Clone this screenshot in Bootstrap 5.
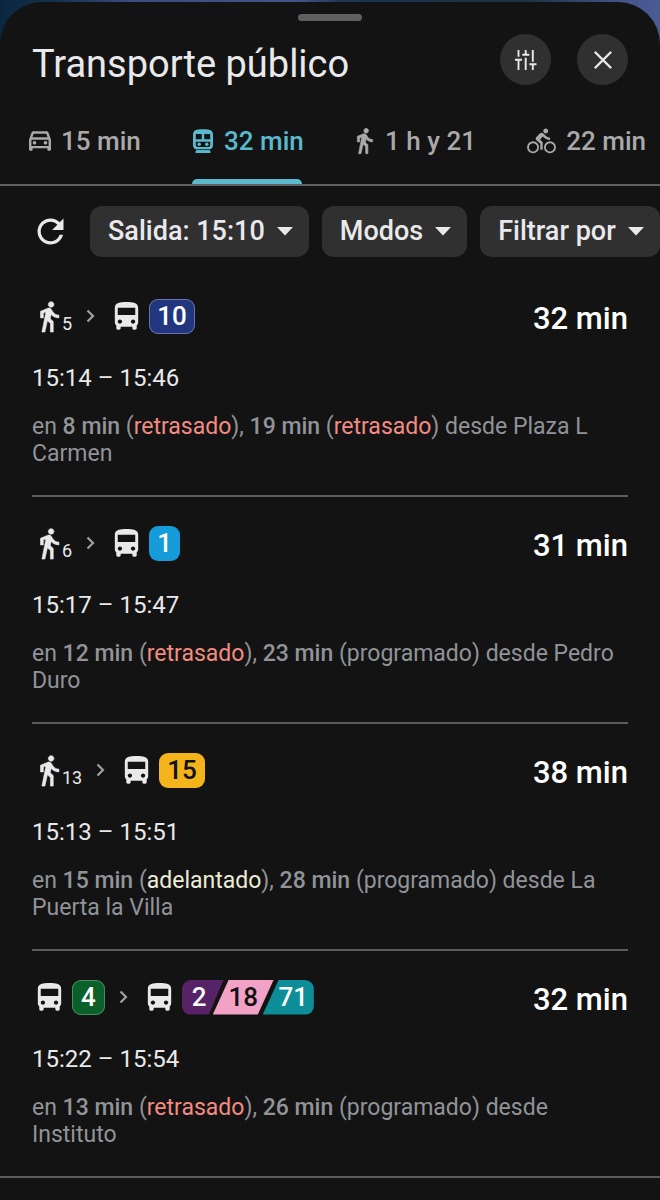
<!DOCTYPE html>
<html lang="es">
<head>
<meta charset="utf-8">
<meta name="viewport" content="width=device-width, initial-scale=1">
<title>Transporte público</title>
<link href="https://cdn.jsdelivr.net/npm/bootstrap@5.3.0/dist/css/bootstrap.min.css" rel="stylesheet">
<style>
  body { font-family: Roboto, "Liberation Sans", sans-serif; color: #e9e9eb; min-height: 100vh;
    background: linear-gradient(90deg, #0b2740 0, #12304c 8%, #3c4c80 20%, #44548a 45%, #1c3550 52%, #1c3348 80%, #46568c 95%, #4a5b94 100%); }
  .sheet { background: #131313; border-radius: 42px 42px 0 0; margin-top: 2px; min-height: calc(100vh - 2px); overflow: hidden; }
  .grabber { width: 64px; height: 7px; border-radius: 4px; background: #606060; margin-top: 12px; }
  .head-row { padding: 13px 32px 0; gap: 26px; }
  .sheet-title { font-size: 38px; line-height: 49px; font-weight: 400; padding-top: 6px; }
  .round-btn { width: 51px; height: 51px; background: #303030; color: #e9e9eb; border: 0; border-radius: 50%; }
  svg { fill: currentColor; flex: none; display: block; }
  .modes { padding: 27px 14px 0 29px; border-bottom: 2px solid #616161; }
  .mode-tab { background: none; border: 0; padding: 0; gap: 10px; height: 68px; align-items: flex-start; font-size: 26px; line-height: 50px; font-weight: 500; color: #a9a9a9; white-space: nowrap; position: relative; }
  .mode-tab svg { height: 50px; }
  .mode-tab.active { color: #5ab9cc; }
  .mode-tab.active::after { content: ""; position: absolute; left: 0; right: 2px; bottom: 0; height: 5px; border-radius: 5px 5px 0 0; background: #5ab9cc; }
  .filters { padding: 20px 0 0 31px; gap: 13px; overflow: hidden; }
  .filters .reload { background: none; border: 0; padding: 0; color: #e9e9eb; margin-right: 7px; }
  .chip { height: 51px; border: 0; border-radius: 12px; background: #303030; color: #e9e9eb; font-size: 27px; font-weight: 500; padding: 0 16px 0 18px; gap: 12px; flex: none; }
  .routes { padding-top: 13px; }
  .route { padding: 28px 0; margin: 0 32px; border-bottom: 2px solid #5c5c5e; }
  .route:last-child { margin: 0; padding-left: 32px; padding-right: 32px; }
  .legs { height: 36px; }
  .walk-min { font-size: 18px; line-height: 20px; align-self: flex-end; margin-left: -4px; }
  .sep { margin: 0 14px; color: #a0a0a0; }
  .line-no { height: 35px; padding: 0 8px; border-radius: 9px; font-size: 26px; line-height: 35px; font-weight: 500; color: #fff; text-align: center; margin-left: 5px; }
  .navy { background: #22367f; box-shadow: inset 0 0 0 1px #6472a6; }
  .sky { background: #159bd8; }
  .amber { background: #f3b31b; color: #111; }
  .green { background: #0b6029; box-shadow: inset 0 0 0 1px #4d8a60; padding: 0 9px; }
  .purple { background: #572367; }
  .pink { background: #f3a2c7; color: #111; }
  .teal { background: #0c8d97; }
  .cut-a { width: 42px; text-align: left; padding-left: 10px; border-radius: 9px 0 0 9px; clip-path: polygon(0 0, 100% 0, calc(100% - 15px) 100%, 0 100%); }
  .cut-b { width: 61px; margin-left: -11px; border-radius: 0; clip-path: polygon(16px 0, 100% 0, calc(100% - 16px) 100%, 0 100%); }
  .cut-c { width: 51px; margin-left: -11px; padding: 0 0 0 10px; border-radius: 0 9px 9px 0; clip-path: polygon(16px 0, 100% 0, 100% 100%, 0 100%); }
  .total { font-size: 31px; line-height: 36px; font-weight: 500; color: #fff; white-space: nowrap; padding-top: 3px; }
  .span-time { font-size: 24px; line-height: 36px; margin-top: 23px; }
  .detail { font-size: 23px; line-height: 27px; color: #919398; margin: 17px 0 0; }
  .detail b { font-weight: 500; }
  .late { color: #f28b82; }
  .early { color: #ececd8; }
</style>
</head>
<body>
<svg width="0" height="0" class="position-absolute" aria-hidden="true">
  <symbol id="walk" viewBox="0 0 24 24"><path stroke="currentColor" stroke-width=".4" d="M13.500 5.500c1.100 0 2-.9 2-2s-.9-2-2-2-2 .9-2 2 .9 2 2 2zM9.800 8.900L7 23h2.100l1.800-8 2.100 2v6h2v-7.500l-2.100-2 .6-3C14.800 12 16.800 13 19 13v-2c-1.900 0-3.500-1-4.300-2.400l-1-1.600c-.4-.6-1-1-1.700-1-.3 0-.5.1-.8.1L6 8.300V13h2V9.600l1.800-.7"/></symbol>
  <symbol id="bus" viewBox="0 0 24 24"><path d="M4 16c0 .88.39 1.670 1 2.220V20c0 .55.45 1 1 1h1c.55 0 1-.45 1-1v-1h8v1c0 .55.45 1 1 1h1c.55 0 1-.45 1-1v-1.780c.61-.55 1-1.340 1-2.220V6c0-3.500-3.580-4-8-4s-8 .5-8 4v10zm3.500 1c-.83 0-1.500-.67-1.500-1.500S6.670 14 7.500 14s1.500.67 1.500 1.500S8.330 17 7.500 17zm9 0c-.83 0-1.500-.67-1.500-1.500s.67-1.500 1.500-1.500 1.500.67 1.500 1.500-.67 1.500-1.500 1.500zm1.500-6H6V6h12v5z"/></symbol>
  <symbol id="next" viewBox="0 0 9 14"><path d="M1.500 1.500 7 7l-5.500 5.500" fill="none" stroke="currentColor" stroke-width="2.200"/></symbol>
  <symbol id="down" viewBox="0 0 16 9"><path d="M0 0h16L8 8.500z"/></symbol>
</svg>

<main class="sheet d-flex flex-column">
  <div class="grabber align-self-center"></div>
  <header class="head-row d-flex align-items-start">
    <h1 class="sheet-title mb-0 me-auto text-nowrap">Transporte público</h1>
    <button type="button" class="round-btn d-flex align-items-center justify-content-center" aria-label="Opciones">
      <svg width="22" height="20" viewBox="0 0 22 20"><path d="M3.500 0v6.700M0 9.700h7M3.500 9.700V20M10.700 0v4.700M7.300 4.700h7M10.700 7.700V20M17.800 0v11.700M14.500 14.200h7M17.800 14.200V20" fill="none" stroke="currentColor" stroke-width="1.900"/></svg>
    </button>
    <button type="button" class="round-btn d-flex align-items-center justify-content-center" aria-label="Cerrar">
      <svg width="18" height="18" viewBox="0 0 18 18"><path d="M1.500 1.500l15 15M16.500 1.500l-15 15" fill="none" stroke="currentColor" stroke-width="2.400" stroke-linecap="round"/></svg>
    </button>
  </header>

  <nav class="modes d-flex justify-content-between" aria-label="Modo de viaje">
    <button type="button" class="mode-tab d-flex"><svg width="22" viewBox="3 4 18 16"><path fill-rule="evenodd" d="M18.920 5.010C18.720 4.420 18.160 4 17.500 4h-11c-.66 0-1.210.42-1.420 1.010L3 11v8c0 .55.45 1 1 1h1c.55 0 1-.45 1-1v-1h12v1c0 .55.45 1 1 1h1c.55 0 1-.45 1-1v-8zM6.850 6h10.290l1.040 3H5.810zM19 16H5v-5h14z"/><circle cx="7.500" cy="13.500" r="1.500"/><circle cx="16.500" cy="13.500" r="1.500"/></svg>15 min</button>
    <button type="button" class="mode-tab active d-flex" aria-current="true"><svg width="22" viewBox="-1 0 22 24"><path fill-rule="evenodd" d="M5 .5C7 0 13 0 15 .5q5 .7 5 5V16q0 4-4 4.500l1.500 2V24h-15v-1.500l1.500-2Q0 20 0 16V5.500Q0 1.200 5 .5zM2.800 5v5.200h6V5zm8.400 0v5.200h6V5zM2.800 12.800v3.200q0 2 2 2h10.400q2 0 2-2v-3.200z"/><path d="M4 20.600h12" stroke="#131313" stroke-width=".8"/><circle cx="6.200" cy="15.300" r="1.700"/><circle cx="13.800" cy="15.300" r="1.700"/></svg>32 min</button>
    <button type="button" class="mode-tab d-flex"><svg width="20" viewBox="4 1.500 17 21.500"><path stroke="currentColor" stroke-width=".5" d="M13.500 5.500c1.100 0 2-.9 2-2s-.9-2-2-2-2 .9-2 2 .9 2 2 2zM9.800 8.900L7 23h2.100l1.800-8 2.100 2v6h2v-7.500l-2.100-2 .6-3C14.800 12 16.800 13 19 13v-2c-1.900 0-3.500-1-4.300-2.400l-1-1.600c-.4-.6-1-1-1.700-1-.3 0-.5.1-.8.1L6 8.300V13h2V9.600l1.800-.7"/></svg>1 h y 21</button>
    <button type="button" class="mode-tab d-flex"><svg width="29" viewBox="0 1.500 24 20.500"><path d="M15.500 5.500c1.100 0 2-.9 2-2s-.9-2-2-2-2 .9-2 2 .9 2 2 2zM10.800 10.500l2.400-2.400.8.8c1.300 1.300 3 2.100 5.100 2.100V9c-1.500 0-2.700-.6-3.600-1.500l-1.900-1.900c-.5-.4-1-.6-1.600-.6s-1.100.2-1.400.6L7.800 8.400c-.4.4-.6.9-.6 1.400 0 .6.2 1.100.6 1.400L11 14v5h2v-6.200z"/><g fill="none" stroke="currentColor" stroke-width="1.500"><circle cx="5" cy="17" r="4.200"/><circle cx="19" cy="17" r="4.200"/></g></svg>22 min</button>
  </nav>

  <div class="filters d-flex align-items-center">
    <button type="button" class="reload" aria-label="Actualizar"><svg width="39" height="39" viewBox="0 0 24 24"><path d="M17.650 6.350C16.200 4.900 14.210 4 12 4c-4.420 0-7.990 3.580-7.990 8s3.570 8 7.990 8c3.730 0 6.840-2.550 7.730-6h-2.080c-.82 2.330-3.040 4-5.650 4-3.310 0-6-2.690-6-6s2.690-6 6-6c1.660 0 3.140.69 4.220 1.780L13 11h7V4z"/></svg></button>
    <button type="button" class="chip d-flex align-items-center">Salida: 15:10 <svg width="16" height="9"><use href="#down"/></svg></button>
    <button type="button" class="chip d-flex align-items-center">Modos <svg width="16" height="9"><use href="#down"/></svg></button>
    <button type="button" class="chip d-flex align-items-center">Filtrar por <svg width="16" height="9"><use href="#down"/></svg></button>
  </div>

  <ul class="routes list-unstyled mb-0">
    <li class="route">
      <div class="d-flex justify-content-between">
        <div class="legs d-flex align-items-center"><svg width="34" height="35"><use href="#walk"/></svg><span class="walk-min">5</span><svg class="sep" width="9" height="14"><use href="#next"/></svg><svg width="35" height="35"><use href="#bus"/></svg><span class="line-no navy">10</span></div>
        <div class="total">32 min</div>
      </div>
      <div class="span-time">15:14 – 15:46</div>
      <p class="detail">en <b>8 min</b> (<span class="late">retrasado</span>), <b>19 min</b> (<span class="late">retrasado</span>) desde Plaza L Carmen</p>
    </li>
    <li class="route">
      <div class="d-flex justify-content-between">
        <div class="legs d-flex align-items-center"><svg width="34" height="35"><use href="#walk"/></svg><span class="walk-min">6</span><svg class="sep" width="9" height="14"><use href="#next"/></svg><svg width="35" height="35"><use href="#bus"/></svg><span class="line-no sky">1</span></div>
        <div class="total">31 min</div>
      </div>
      <div class="span-time">15:17 – 15:47</div>
      <p class="detail">en <b>12 min</b> (<span class="late">retrasado</span>), <b>23 min</b> (programado) desde Pedro Duro</p>
    </li>
    <li class="route">
      <div class="d-flex justify-content-between">
        <div class="legs d-flex align-items-center"><svg width="34" height="35"><use href="#walk"/></svg><span class="walk-min">13</span><svg class="sep" width="9" height="14"><use href="#next"/></svg><svg width="35" height="35"><use href="#bus"/></svg><span class="line-no amber">15</span></div>
        <div class="total">38 min</div>
      </div>
      <div class="span-time">15:13 – 15:51</div>
      <p class="detail">en <b>15 min</b> (<span class="early">adelantado</span>), <b>28 min</b> (programado) desde La Puerta la Villa</p>
    </li>
    <li class="route">
      <div class="d-flex justify-content-between">
        <div class="legs d-flex align-items-center"><svg width="35" height="35"><use href="#bus"/></svg><span class="line-no green">4</span><svg class="sep" width="9" height="14"><use href="#next"/></svg><svg width="35" height="35"><use href="#bus"/></svg><span class="line-no purple cut-a">2</span><span class="line-no pink cut-b">18</span><span class="line-no teal cut-c">71</span></div>
        <div class="total">32 min</div>
      </div>
      <div class="span-time">15:22 – 15:54</div>
      <p class="detail">en <b>13 min</b> (<span class="late">retrasado</span>), <b>26 min</b> (programado) desde Instituto</p>
    </li>
  </ul>
</main>
<script src="https://cdn.jsdelivr.net/npm/bootstrap@5.3.0/dist/js/bootstrap.bundle.min.js"></script>
</body>
</html>
